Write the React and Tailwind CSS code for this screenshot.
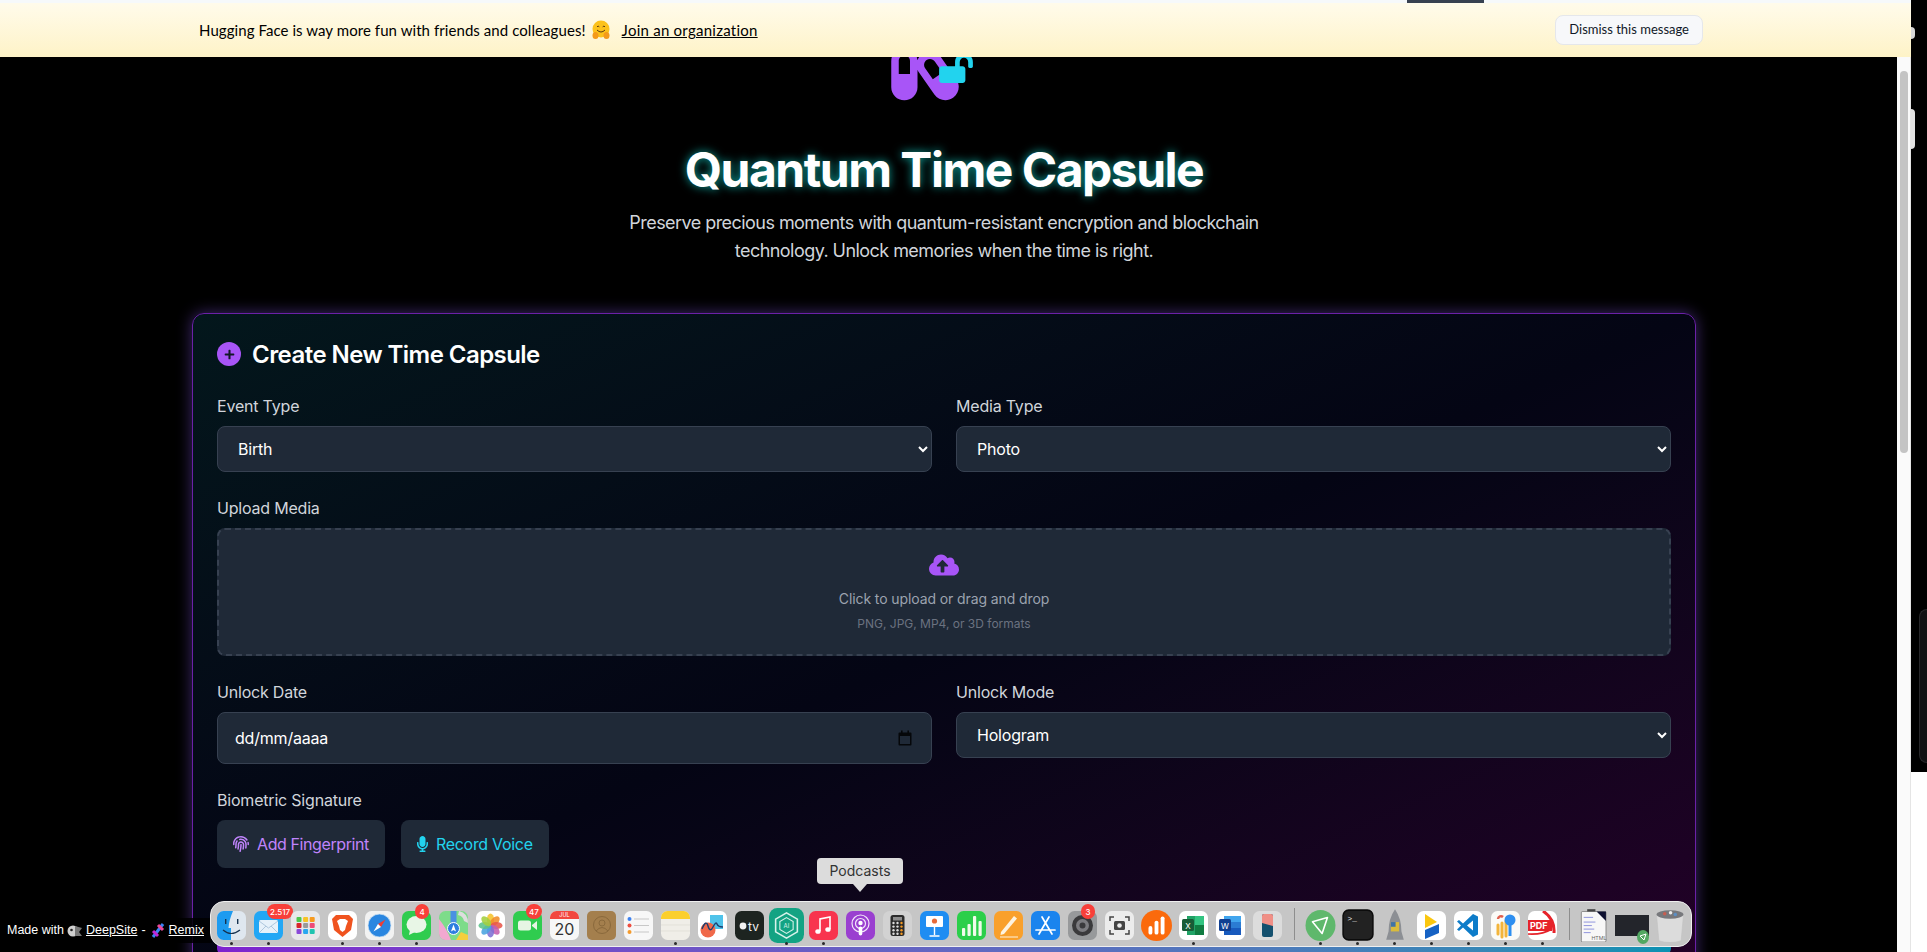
import React from 'react';
import { FaCapsules, FaLockOpen, FaPlus, FaCloudUploadAlt, FaFingerprint, FaMicrophone } from 'react-icons/fa';

const inter = { fontFamily: 'Inter, sans-serif' };

// every dock icon is a 29x29 drawing
const Box = ({ size = 29, children, className = '' }) => (
  <svg width={size} height={size} viewBox="0 0 29 29" className={className}>{children}</svg>
);

const dockIcons = {
  finder: (
    <Box>
      <rect width="29" height="29" rx="6.5" fill="#dfe7ef" />
      <path d="M6.5 0H16Q12 9 11.5 17H14V29H6.5A6.5 6.5 0 0 1 0 22.5V6.5A6.5 6.5 0 0 1 6.5 0Z" fill="#1d9bf0" />
      <path d="M6 19Q14 26 23 19" fill="none" stroke="#16324f" strokeWidth="1.2" />
      <rect x="8" y="8" width="1.4" height="5" fill="#16324f" /><rect x="20" y="8" width="1.4" height="5" fill="#16324f" />
    </Box>
  ),
  mail: (
    <Box>
      <rect width="29" height="29" rx="6.5" fill="#22a7f5" />
      <rect x="5" y="9" width="19" height="13" rx="1.5" fill="#e6f1fa" />
      <path d="M5 10L14.5 17L24 10M5 22L12 15M24 22L17 15" fill="none" stroke="#9fbdd6" strokeWidth=".8" />
    </Box>
  ),
  launchpad: (
    <Box>
      <rect width="29" height="29" rx="6.5" fill="#e8e8ea" />
      {[['#4ec74e', '#f7c325', '#f79a1e'], ['#d9252a', '#9a9a9a', '#ee4b78'], ['#8a49d8', '#2aa7f0', '#20c4b0']].map((row, r) =>
        row.map((c, i) => <rect key={c} x={5.5 + i * 6.6} y={6 + r * 6} width="5" height="5" rx="1" fill={c} />)
      )}
    </Box>
  ),
  brave: (
    <Box>
      <rect width="29" height="29" rx="6.5" fill="#fff" />
      <path d="M8 4H21L25 8L23 19L14.5 26L6 19L4 8Z" fill="#f0531f" />
      <path d="M9 10L12 8H17L20 10L18 15L17 19L14.5 21L12 19L11 15Z" fill="#fff" />
    </Box>
  ),
  safari: (
    <Box>
      <rect width="29" height="29" rx="6.5" fill="#f2f2f2" />
      <circle cx="14.5" cy="14.5" r="11.5" fill="#2a86e0" stroke="#d4e4f2" strokeWidth=".8" />
      <path d="M20.5 8.5L16 16L13 13Z" fill="#ef3b33" /><path d="M8.5 20.5L13 13L16 16Z" fill="#fff" />
    </Box>
  ),
  messages: (
    <Box>
      <rect width="29" height="29" rx="6.5" fill="#2fcc4f" />
      <ellipse cx="14.5" cy="13.5" rx="10" ry="8.5" fill="#e8f6e6" /><path d="M8 19L7 24L13 21Z" fill="#e8f6e6" />
    </Box>
  ),
  maps: (
    <Box>
      <rect width="29" height="29" rx="6.5" fill="#7ddc8a" />
      <path d="M0 8Q8 18 12 29H6.5A6.5 6.5 0 0 1 0 22.5Z" fill="#f2a8d0" /><path d="M17 29L22 21L29 24V29Z" fill="#f5cf3d" />
      <rect x="11.5" y="0" width="6" height="14" fill="#4a90e2" /><path d="M20 0Q29 2 29 12L25 10Q24 5 19 4Z" fill="#ddd" />
      <circle cx="14.5" cy="17.5" r="6" fill="#2e7ee0" stroke="#fff" /><path d="M14.5 13.5L17 20.5L14.5 19L12 20.5Z" fill="#fff" />
    </Box>
  ),
  photos: (
    <Box>
      <rect width="29" height="29" rx="6.5" fill="#fff" />
      {['#f5c32c', '#f08c2a', '#e8574a', '#c45fb0', '#7d6fd4', '#4aa3df', '#5cc38a', '#a4cf3f'].map((c, i) => (
        <ellipse key={c} cx="14.5" cy="8.5" rx="3.6" ry="6" fill={c} opacity=".88" transform={`rotate(${i * 45} 14.5 14.5)`} />
      ))}
    </Box>
  ),
  facetime: (
    <Box>
      <rect width="29" height="29" rx="6.5" fill="#2fcc4f" />
      <rect x="5" y="9.5" width="13" height="10" rx="2.5" fill="#e6f5e4" /><path d="M19 14L24 10V19L19 15Z" fill="#e6f5e4" />
    </Box>
  ),
  calendar: (
    <Box>
      <rect width="29" height="29" rx="6.5" fill="#f7f7f7" />
      <path d="M0 8V6.5A6.5 6.5 0 0 1 6.5 0H22.5A6.5 6.5 0 0 1 29 6.5V8Z" fill="#f2473f" />
      <text x="14.5" y="6.3" textAnchor="middle" fontSize="5.5" fill="#fff" fontFamily="Inter, sans-serif">JUL</text>
      <text x="14.5" y="24" textAnchor="middle" fontSize="16" fill="#333" fontFamily="Inter, sans-serif">20</text>
    </Box>
  ),
  contacts: (
    <Box>
      <rect width="29" height="29" rx="5" fill="#a47f4d" />
      <circle cx="15" cy="14" r="8.5" fill="none" stroke="#8a693c" />
      <circle cx="15" cy="12" r="3" fill="none" stroke="#8a693c" /><path d="M9 20Q15 13 21 20" fill="none" stroke="#8a693c" />
    </Box>
  ),
  reminders: (
    <Box>
      <rect width="29" height="29" rx="6.5" fill="#f7f7f7" />
      {['#3d82f0', '#ee4d3f', '#f49a2b'].map((c, i) => (
        <g key={c}><circle cx="5.5" cy={8 + i * 6.5} r="2" fill={c} /><rect x="10" y={7.6 + i * 6.5} width="15" height=".8" fill="#bbb" /></g>
      ))}
    </Box>
  ),
  notes: (
    <Box>
      <rect width="29" height="29" rx="6.5" fill="#f0eee8" />
      <path d="M0 8V6.5A6.5 6.5 0 0 1 6.5 0H22.5A6.5 6.5 0 0 1 29 6.5V8Z" fill="#fbcf2d" />
      <path d="M0 14H29M0 20H29" stroke="#dedbd2" strokeWidth=".7" />
    </Box>
  ),
  freeform: (
    <Box>
      <rect width="29" height="29" rx="6.5" fill="#fff" />
      <rect x="12" y="4" width="13" height="14" fill="#4fc3ea" /><circle cx="10" cy="19" r="7.5" fill="#f0694a" />
      <path d="M4 18Q8 8 10 15T15 16T19 13T25 16" fill="none" stroke="#1f3f70" strokeWidth="1.4" />
    </Box>
  ),
  tv: (
    <Box>
      <rect width="29" height="29" rx="6.5" fill="#1d2420" />
      <circle cx="8" cy="15" r="3.4" fill="#f2f2f2" />
      <text x="13" y="19.5" fontSize="12" fill="#f2f2f2" fontFamily="Inter, sans-serif">tv</text>
    </Box>
  ),
  ai: (
    <Box size={35}>
      <rect width="29" height="29" rx="7" fill="#13a383" />
      <path d="M14.5 4L23.5 9.2V19.8L14.5 25L5.5 19.8V9.2Z" fill="none" stroke="#d8f2ea" strokeWidth="1.3" />
      <path d="M14.5 8L20 11.2V17.8L14.5 21L9 17.8V11.2Z" fill="none" stroke="#d8f2ea" strokeWidth=".9" />
      <text x="14.5" y="16.3" textAnchor="middle" fontSize="5" fill="#d8f2ea" fontFamily="Inter, sans-serif">AI</text>
    </Box>
  ),
  music: (
    <Box>
      <rect width="29" height="29" rx="6.5" fill="#f8344e" />
      <path d="M11 20V8L21 6V18" fill="none" stroke="#fff" strokeWidth="1.6" /><ellipse cx="9" cy="20.5" rx="2.7" ry="2.3" fill="#fff" /><ellipse cx="19" cy="18.5" rx="2.7" ry="2.3" fill="#fff" />
    </Box>
  ),
  podcasts: (
    <Box>
      <rect width="29" height="29" rx="6.5" fill="#9a3fd0" />
      <circle cx="14.5" cy="12.5" r="8.5" fill="none" stroke="#f2e6fa" strokeWidth="1.2" /><circle cx="14.5" cy="12.5" r="5" fill="none" stroke="#f2e6fa" strokeWidth="1.2" />
      <circle cx="14.5" cy="12" r="2.2" fill="#fff" /><rect x="12.7" y="15.5" width="3.6" height="9" rx="1.8" fill="#fff" />
    </Box>
  ),
  calculator: (
    <Box>
      <rect width="29" height="29" rx="6.5" fill="#d2d2d2" />
      <rect x="7.5" y="4" width="14" height="21" rx="2.5" fill="#2b2b2b" /><rect x="10" y="6" width="9" height="3.5" fill="#8d8d8d" />
      {[0, 1, 2, 3].map((r) => [0, 1, 2].map((c) => (
        <circle key={`${r}${c}`} cx={10.5 + c * 4} cy={12 + r * 3.6} r="1.2" fill={c === 2 ? '#f59a23' : '#ddd'} />
      )))}
    </Box>
  ),
  keynote: (
    <Box>
      <rect width="29" height="29" rx="6.5" fill="#1f8df2" />
      <rect x="6" y="5" width="17" height="11" rx="1" fill="#fff" /><circle cx="14.5" cy="10" r="2.6" fill="#e66a3a" />
      <path d="M14.5 16V24M9.5 25H19.5" stroke="#fff" strokeWidth="1.4" />
    </Box>
  ),
  numbers: (
    <Box>
      <rect width="29" height="29" rx="6.5" fill="#2bcf4a" />
      {[[5, 17, 8], [10.5, 13, 12], [16, 5, 20], [21.5, 10, 15]].map(([x, y, h]) => <rect key={x} x={x} y={y} width="3.2" height={h} rx="1" fill="#f0fbea" />)}
    </Box>
  ),
  pages: (
    <Box>
      <rect width="29" height="29" rx="6.5" fill="#f9a02b" />
      <path d="M7 21L20 5L23 7.5L10 23L6.5 24Z" fill="#fdf3e0" /><path d="M6 26H24" stroke="#fdf3e0" />
    </Box>
  ),
  appstore: (
    <Box>
      <rect width="29" height="29" rx="6.5" fill="#1b84ee" />
      <path d="M11 6L21 23M18 6L8 23M5 19H24" stroke="#fff" strokeWidth="1.7" strokeLinecap="round" />
    </Box>
  ),
  settings: (
    <Box>
      <rect width="29" height="29" rx="6.5" fill="#97999b" />
      <circle cx="14.5" cy="14.5" r="10.5" fill="#3a3a3c" /><circle cx="14.5" cy="14.5" r="6.5" fill="#7c7c80" /><circle cx="14.5" cy="14.5" r="3" fill="#3a3a3c" />
    </Box>
  ),
  screenshot: (
    <Box>
      <rect width="29" height="29" rx="6.5" fill="#ececec" />
      <path d="M5 10V6H9M20 6H24V10M24 19V23H20M9 23H5V19" fill="none" stroke="#444" strokeWidth="1.5" />
      <rect x="9" y="10" width="11" height="9" rx="1.5" fill="#444" /><circle cx="14.5" cy="14.5" r="2.3" fill="#ececec" />
    </Box>
  ),
  orange: (
    <Box size={31}>
      <circle cx="14.5" cy="14.5" r="14.5" fill="#fb6a0c" />
      <rect x="7" y="15" width="3.6" height="8" rx="1.8" fill="#fff" /><rect x="12.7" y="10" width="3.6" height="13" rx="1.8" fill="#fff" /><rect x="18.4" y="6" width="3.6" height="17" rx="1.8" fill="#fff" />
    </Box>
  ),
  excel: (
    <Box>
      <rect width="29" height="29" rx="6.5" fill="#fff" />
      <path d="M8 5H25V24H8Z" fill="#21a366" /><path d="M16 5H25V14H16Z" fill="#33c481" /><path d="M16 14H25V24H16Z" fill="#107c41" />
      <rect x="3" y="8" width="12" height="12" rx="1.5" fill="#185c37" />
      <text x="9" y="17.5" textAnchor="middle" fontSize="8" fill="#fff" fontFamily="Inter, sans-serif">X</text>
    </Box>
  ),
  word: (
    <Box>
      <rect width="29" height="29" rx="6.5" fill="#fff" />
      <path d="M8 5H25V11H8Z" fill="#41a5ee" /><path d="M8 11H25V17H8Z" fill="#2b7cd3" /><path d="M8 17H25V24H8Z" fill="#185abd" />
      <rect x="3" y="8" width="12" height="12" rx="1.5" fill="#103f91" />
      <text x="9" y="17.5" textAnchor="middle" fontSize="8" fill="#fff" fontFamily="Inter, sans-serif">W</text>
    </Box>
  ),
  iphone: (
    <Box>
      <rect width="29" height="29" rx="6.5" fill="#dcdcdc" />
      <rect x="9" y="3" width="11" height="23" rx="2" fill="#14506e" /><path d="M9 5Q9 3 11 3H18Q20 3 20 5V15L9 12Z" fill="#f08f86" />
    </Box>
  ),
  vpn: (
    <Box size={31}>
      <ellipse cx="14.5" cy="14.5" rx="14" ry="14.5" fill="#5fb86c" />
      <path d="M7 11L21 7L16 22Z" fill="none" stroke="#fff" strokeWidth="1.5" strokeLinejoin="round" />
    </Box>
  ),
  terminal: (
    <Box size={32}>
      <rect x="1" y="1" width="27" height="27" rx="5" fill="#222" stroke="#0c0c0c" strokeWidth="1.4" />
      <text x="5" y="11" fontSize="7" fill="#eee" fontFamily="Liberation Mono, monospace">&gt;_</text>
    </Box>
  ),
  rocket: (
    <Box size={34}>
      <path d="M14.5 1Q20 9 20 20L22 27H7L9 20Q9 9 14.5 1Z" fill="#8c8f94" />
      <path d="M11 12H18V20H11Z" fill="#d9bb3d" /><path d="M11 12H15V16H11Z" fill="#3e72a8" />
    </Box>
  ),
  yellowblue: (
    <Box>
      <rect width="29" height="29" rx="6.5" fill="#fff" />
      <path d="M8 3L20 11L8 17Z" fill="#fbc70f" /><path d="M8 19L22 13V22L8 28Z" fill="#1662c4" />
    </Box>
  ),
  vscode: (
    <Box>
      <rect width="29" height="29" rx="6.5" fill="#fff" />
      <path d="M19 3L24 5.5V23.5L19 26L9 16.5L5 20L3 18.5L7 14.5L3 10.5L5 9L9 12.5ZM19 9.5L13 14.5L19 19.5Z" fill="#0d7cc9" />
    </Box>
  ),
  keys: (
    <Box>
      <rect width="29" height="29" rx="6.5" fill="#fbfbf7" />
      <path d="M7 14V23M11 12V26M15 10V25" stroke="#f3b53a" strokeWidth="3" strokeLinecap="round" />
      <path d="M7 8A3 3 0 0 1 12 6" fill="none" stroke="#e0604e" strokeWidth="2.5" /><circle cx="19" cy="9" r="5.5" fill="#2d8ff0" /><rect x="17.5" y="12" width="3" height="13" fill="#2d8ff0" />
    </Box>
  ),
  pdf: (
    <Box>
      <rect width="29" height="29" rx="6.5" fill="#fff" />
      <path d="M15 0Q27 8 26 22" fill="none" stroke="#e6232a" strokeWidth="3" /><rect y="9" width="24" height="11" fill="#e6232a" /><path d="M0 23Q14 24 24 18" fill="none" stroke="#e6232a" strokeWidth="1.6" />
      <text x="2" y="18" fontSize="9" fontWeight="700" fill="#fff" fontFamily="Inter, sans-serif">PDF</text>
    </Box>
  ),
  html: (
    <Box size={34}>
      <rect x="2" y="3" width="21" height="26" rx="1" fill="#f7f7f7" stroke="#555" strokeWidth=".5" /><path d="M7 1H14V3H7Z" fill="#444" /><path d="M15 3H23V11Z" fill="#0d1030" />
      <path d="M4 8H12M4 12H14M4 15H11M4 18H13M4 21H10" stroke="#7a80d8" strokeWidth=".7" />
      <text x="17" y="27" textAnchor="middle" fontSize="4.5" fill="#666" fontFamily="Inter, sans-serif">HTML</text>
    </Box>
  ),
  shot: (
    <div className="relative flex h-[37px] w-[36px] items-center">
      <div className="h-[21px] w-[34px] bg-[#23252b]" />
      <svg width="12" height="14" viewBox="0 0 12 14" className="absolute bottom-0 left-[22px]">
        <ellipse cx="6" cy="7" rx="6" ry="7" fill="#52a862" /><path d="M3 6L9 4L7 10Z" fill="none" stroke="#fff" />
      </svg>
    </div>
  ),
  trash: (
    <Box size={34}>
      <path d="M3 6H26L24 28Q14.5 31 5 28Z" fill="#dcdcdc" stroke="#c2c2c2" strokeWidth=".5" />
      <ellipse cx="14.5" cy="5.5" rx="11.5" ry="3.6" fill="#77787c" />
      <circle cx="10" cy="5" r="1.5" fill="#c85d50" /><circle cx="15" cy="4" r="1.5" fill="#eee" /><circle cx="19" cy="5.5" r="1.5" fill="#5c8fc4" />
    </Box>
  ),
};

const dock = [
  ['finder', 1], ['mail', 1, '2.517'], ['launchpad'], ['brave', 1], ['safari', 1], ['messages', 1, '4'], ['maps'], ['photos'],
  ['facetime', 0, '47'], ['calendar'], ['contacts'], ['reminders'], ['notes', 1], ['freeform'], ['tv'], ['ai', 1], ['music', 1],
  ['podcasts'], ['calculator'], ['keynote'], ['numbers'], ['pages'], ['appstore'], ['settings', 0, '3'], ['screenshot'], ['orange'],
  ['excel', 1], ['word'], ['iphone'], '|', ['vpn', 1], ['terminal', 1], ['rocket', 1], ['yellowblue', 1], ['vscode', 1], ['keys', 1],
  ['pdf', 1], '|', ['html'], ['shot'], ['trash'],
];

const Dock = () => (
  <div className="absolute left-[210px] top-[901px] flex h-[46px] w-[1482px] items-start rounded-[14px] border border-[#efefef] bg-[#c6c6c6] pl-[2px]">
    {dock.map((item, i) =>
      item === '|' ? (
        <div key={i} className="flex h-full w-[16px] shrink-0 justify-center pt-[6px]">
          <div className="h-[32px] w-px bg-[#8e8e8e]" />
        </div>
      ) : (
        <div key={item[0]} className="relative flex h-full w-[37px] shrink-0 justify-center pt-[6px]">
          <div className="absolute bottom-[5px] left-0 right-0 flex h-[32px] items-center justify-center">{dockIcons[item[0]]}</div>
          {item[2] && (
            <span className="absolute left-[17px] top-[2px] flex h-[15px] min-w-[14px] items-center justify-center rounded-full bg-[#f8403a] px-[3px] text-[8px] font-medium text-white [font-family:Inter,sans-serif]">
              {item[2]}
            </span>
          )}
          {item[1] === 1 && <span className="absolute bottom-[1.5px] h-[3px] w-[3px] rounded-full bg-[#2a2a2a]" />}
        </div>
      )
    )}
  </div>
);

const Field = ({ label, children, className = '' }) => (
  <div className={className}>
    <label className="mb-2 block h-6 text-base leading-6 tracking-[-0.2px] text-[#d1d5db]">{label}</label>
    {children}
  </div>
);

const Select = ({ value }) => (
  <select
    defaultValue={value}
    className="block h-[46px] w-full rounded-lg border border-[#374151] bg-[#1f2937] px-4 text-base tracking-[-0.2px] text-white"
    style={inter}
  >
    <option>{value}</option>
  </select>
);

const HugEmoji = () => (
  <svg width="20" height="20" viewBox="0 0 20 20" className="mx-[5px] shrink-0">
    <circle cx="10" cy="9" r="8.5" fill="#fcc21b" />
    <path d="M6 6.8q1.2-1.3 2.3 0M11.7 6.8q1.2-1.3 2.3 0" fill="none" stroke="#5b3a12" strokeWidth="1" />
    <path d="M6 10q4 4 8 0" fill="none" stroke="#5b3a12" strokeWidth="1" />
    <ellipse cx="4.5" cy="15.5" rx="3" ry="3.6" fill="#f49a1a" /><ellipse cx="15.5" cy="15.5" rx="3" ry="3.6" fill="#f49a1a" />
  </svg>
);

const Banner = () => (
  <div className="absolute left-0 top-0 w-[1911px] border-t-[3px] border-[#f6f9fb] bg-gradient-to-b from-[#fffbeb] to-[#fef3c7]">
    <div className="absolute left-[1407px] top-[-3px] h-[3px] w-[77px] bg-[#374151]" />
    <div className="flex h-[54px] items-center pl-[199px] pr-[208px] text-[15px] text-black [font-family:Lato,sans-serif]">
      <span className="tracking-[0.07px]">Hugging Face is way more fun with friends and colleagues!</span>
      <HugEmoji />
      <a className="ml-[6px] tracking-[0.25px] underline">Join an organization</a>
      <button className="ml-auto h-[30px] rounded-lg border border-[#e5e7eb] bg-[#f7f8fa] px-[13px] text-[13px] text-[#111827]">
        Dismiss this message
      </button>
    </div>
  </div>
);

export default function App() {
  return (
    <div className="relative flex h-[952px] w-[1927px] overflow-hidden bg-white" style={inter}>
      <main className="h-full w-[1897px] shrink-0 overflow-hidden bg-black pl-[192px] pr-[201px] pt-[44px]">
        <header className="flex flex-col items-center">
          <div className="relative mr-[38px] h-[60px] w-[68px]">
            <FaCapsules size={60} color="#a855f7" className="h-[60px] w-[68px]" />
            <FaLockOpen size={30} color="#22d3ee" className="absolute left-[48px] top-[9px] h-[30px] w-[34px]" />
          </div>
          <h1 className="mt-[42px] text-5xl font-bold tracking-[-1.5px] text-white [text-shadow:0_0_10px_rgba(20,230,220,0.7)]">Quantum Time Capsule</h1>
          <p className="mt-[15px] max-w-2xl text-center text-lg leading-7 tracking-[-0.55px] text-[#d1d5db]">
            Preserve precious moments with quantum-resistant encryption and blockchain technology. Unlock memories when the time is right.
          </p>
        </header>

        <section className="mt-[48px] rounded-xl border border-[#6b21a8] bg-gradient-to-br from-[#03171c] via-[#040514] to-[#230028] p-6 shadow-[0_0_15px_rgba(139,92,246,0.45)]">
          <h2 className="flex h-8 items-center text-2xl font-semibold tracking-[-0.55px] text-white">
            <span className="mr-[11px] flex h-6 w-6 items-center justify-center rounded-full bg-[#a855f7] text-[#111827]">
              <FaPlus size={11} />
            </span>
            <span className="pt-[2px]">Create New Time Capsule</span>
          </h2>

          <div className="mt-6 grid grid-cols-2 gap-x-6">
            <Field label="Event Type"><Select value="Birth" /></Field>
            <Field label="Media Type"><Select value="Photo" /></Field>

            <Field label="Upload Media" className="col-span-2 mt-6">
              <div className="flex h-[128px] flex-col items-center rounded-lg border-2 border-dashed border-[#374151] bg-[#1f2937] pt-[20px]">
                <FaCloudUploadAlt size={30} color="#a855f7" />
                <p className="mt-[9px] text-sm leading-5 tracking-[-0.1px] text-[#9ca3af]">Click to upload or drag and drop</p>
                <p className="mt-[7px] text-xs leading-4 text-[#6b7280]">PNG, JPG, MP4, or 3D formats</p>
              </div>
            </Field>

            <Field label="Unlock Date" className="mt-6">
              <div className="flex h-[52px] items-center justify-between rounded-lg border border-[#374151] bg-[#1f2937] pl-[17px] pr-[19px] text-base tracking-[-0.2px] text-white">
                <span>dd/mm/aaaa</span>
                <svg width="14" height="16" viewBox="0 0 14 16">
                  <path d="M1.5 2.5H12.5A1 1 0 0 1 13.5 3.5V14.5A1 1 0 0 1 12.5 15.5H1.5A1 1 0 0 1 .5 14.5V3.5A1 1 0 0 1 1.5 2.5Z" fill="#05070a" />
                  <rect x="2" y="6" width="10" height="8" fill="#1f2937" />
                  <rect x="3" y="0.5" width="1.6" height="3" fill="#05070a" /><rect x="9.4" y="0.5" width="1.6" height="3" fill="#05070a" />
                </svg>
              </div>
            </Field>
            <Field label="Unlock Mode" className="mt-6"><Select value="Hologram" /></Field>

            <Field label="Biometric Signature" className="col-span-2 mt-6">
              <div className="flex gap-4">
                <button className="flex h-12 items-center gap-2 rounded-lg bg-[#1f2937] px-4 text-base tracking-[-0.4px] text-[#c084fc]">
                  <FaFingerprint size={16} />
                  Add Fingerprint
                </button>
                <button className="flex h-12 items-center gap-2 rounded-lg bg-[#1f2937] px-4 text-base tracking-[-0.3px] text-[#22d3ee]">
                  <FaMicrophone size={16} className="w-[11px]" />
                  Record Voice
                </button>
              </div>
            </Field>
          </div>

          <div className="mt-[36px] h-[52px] rounded-lg bg-gradient-to-r from-[#7e22ce] to-[#0891b2]" />
        </section>
      </main>

      <div className="relative h-full w-[14px] shrink-0 border-r border-[#e5e5e5] bg-[#fafafa]">
        <div className="absolute left-[3px] top-[71px] h-[382px] w-2 rounded-full bg-[#c4c4c4]" />
      </div>

      <div className="h-[772px] w-4 shrink-0 bg-black pl-2 pt-[609px]">
        <div className="h-[154px] rounded-l-lg border border-r-0 border-[#27272a] bg-[#111113]" />
      </div>

      {/* window chrome laid over the page */}
      <Banner />
      <div className="absolute left-[1911px] top-[27px] h-3 w-1 rounded-r-full bg-[#d8d8d8]" />
      <div className="absolute left-[1911px] top-[109px] h-10 w-1 rounded-r-md bg-[#e2e2e2]" />

      <div className="absolute left-0 top-[918px] flex h-[25px] w-[212px] items-center bg-black/85 pl-[7px] text-[12.5px] text-white [font-family:'Liberation_Sans',sans-serif]">
        Made with
        <svg width="16" height="14" viewBox="0 0 16 14" className="mx-[3px]">
          <circle cx="6" cy="7" r="5.5" fill="#cfcfcf" /><path d="M8 2L15 4L12 8L15 12L8 12Z" fill="#777" /><circle cx="4.5" cy="6" r="1.3" fill="#222" />
        </svg>
        <a className="underline">DeepSite</a>
        <span className="mx-[4px]">-</span>
        <svg width="16" height="18" viewBox="0 0 16 18" className="mr-[3px]">
          <path d="M13 2L3 15" stroke="#3b82f6" strokeWidth="3" /><path d="M3 9L8 14" stroke="#c026d3" strokeWidth="3" /><path d="M8 3L13 8" stroke="#ec4899" strokeWidth="3" />
        </svg>
        <a className="underline">Remix</a>
      </div>

      <Dock />

      <div className="absolute left-[817px] top-[858px] flex h-[26px] w-[86px] items-center justify-center rounded bg-[#dcdcdc] text-sm text-[#333]">
        Podcasts
        <span className="absolute left-[36px] top-[26px] h-0 w-0 border-x-[7px] border-t-[8px] border-x-transparent border-t-[#dcdcdc]" />
      </div>
    </div>
  );
}
